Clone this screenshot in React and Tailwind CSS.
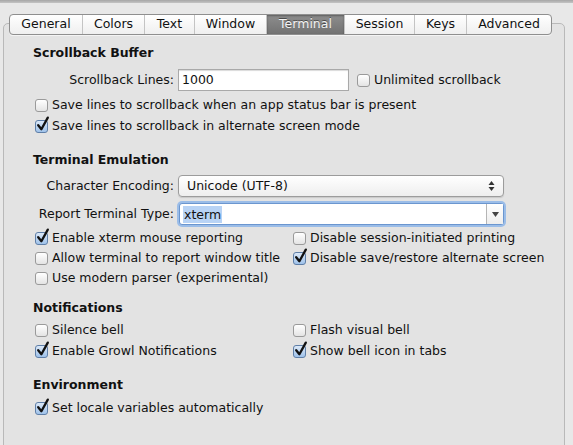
import React from 'react';

const tabs = [
    { name: 'General', w: 'w-[72px]' },
    { name: 'Colors', w: 'w-[62px]' },
    { name: 'Text', w: 'w-[50px]' },
    { name: 'Window', w: 'w-[72px]' },
    { name: 'Terminal', w: 'w-[78px]', active: true },
    { name: 'Session', w: 'w-[70px]' },
    { name: 'Keys', w: 'w-[52px]' },
    { name: 'Advanced', w: 'w-[85px]' },
];

const Checkbox = ({ checked }) => (
    <span className="relative inline-block w-[13px] h-[13px] shrink-0">
        <span className={`absolute inset-0 rounded-[3px] border ${checked
            ? 'border-[#5f7fa8] bg-gradient-to-b from-[#dbe8f7] to-[#9fc2ea]'
            : 'border-[#9a9a9a] bg-gradient-to-b from-[#ffffff] to-[#e4e4e4]'}`} />
        {checked && (
            <svg className="absolute -top-[4px] left-[1px] w-[14px] h-[16px]" viewBox="0 0 14 16">
                <path d="M2.2 9.2 L5.4 13.2 L11.8 1.6" fill="none" stroke="#111" strokeWidth="2.3" strokeLinecap="round" strokeLinejoin="round" />
            </svg>
        )}
    </span>
);

const Check = ({ label, checked, h = 'h-[20px]' }) => (
    <div className={`flex items-center gap-[4px] ${h}`}>
        <Checkbox checked={checked} />
        <span className="whitespace-nowrap">{label}</span>
    </div>
);

const Header = ({ children, mt }) => (
    <div className={`h-[18px] flex items-center font-bold ${mt}`}>{children}</div>
);

export default function App() {
    return (
        <div className="w-[573px] h-[445px] overflow-hidden bg-[#e8e8e8] text-[12.5px] text-[#111]"
            style={{ fontFamily: '"DejaVu Sans", Verdana, sans-serif' }}>
            <div className="h-[3px] bg-gradient-to-b from-[#a6a6a6] to-[#c4c4c4]" />

            <div className="flex pt-[11px]">
                <div className="w-[9px] shrink-0" />
                {/* Segmented tabs */}
                <div className="relative z-10 flex h-[21px] rounded-[4px] border border-[#8f8f8f] bg-gradient-to-b from-[#ffffff] to-[#efefef] overflow-hidden shadow-[0_1px_0_rgba(255,255,255,0.6)]">
                    {tabs.map((t, i) => (
                        <div key={t.name}
                            className={`${t.w} flex items-center justify-center ${i > 0 ? 'border-l border-[#c4c4c4]' : ''} ${t.active
                                ? 'bg-gradient-to-b from-[#8e8e8e] to-[#727272] text-[#f4f4f4] shadow-[inset_0_1px_2px_rgba(0,0,0,0.35)]'
                                : ''}`}>
                            <span style={t.active ? { textShadow: '0 -1px 0 rgba(0,0,0,0.45)' } : undefined}>{t.name}</span>
                        </div>
                    ))}
                </div>
            </div>

            <div className="flex">
                <div className="w-[3px] shrink-0" />
                <div className="-mt-[12px] w-[562px] h-[440px] rounded-[5px] border border-[#b9b9b9] bg-[#e3e3e3] pl-[29px] pt-[20px]">
                    <Header>Scrollback Buffer</Header>

                    <div className="mt-[7px] flex items-center h-[22px]">
                        <span className="w-[141px] text-right">Scrollback Lines:</span>
                        <div className="ml-[4px] w-[171px] h-[22px] border border-[#a9a9a9] bg-white flex items-center pl-[3px] shadow-[inset_0_1px_1px_rgba(0,0,0,0.15)]">1000</div>
                        <div className="ml-[8px]"><Check label="Unlimited scrollback" checked={false} /></div>
                    </div>

                    <div className="mt-[4px] pl-[2px]">
                        <Check h="h-[21px]" label="Save lines to scrollback when an app status bar is present" checked={false} />
                        <Check h="h-[21px]" label="Save lines to scrollback in alternate screen mode" checked />
                    </div>

                    <Header mt="mt-[14px]">Terminal Emulation</Header>

                    <div className="mt-[6px] flex items-center h-[22px]">
                        <span className="w-[141px] text-right">Character Encoding:</span>
                        <div className="ml-[4px] w-[326px] h-[22px] rounded-[4px] border border-[#9c9c9c] bg-gradient-to-b from-[#ffffff] to-[#eeeeee] flex items-center pl-[8px] pr-[8px] shadow-[0_1px_1px_rgba(0,0,0,0.12)]">
                            <span className="flex-1">Unicode (UTF-8)</span>
                            <svg width="7" height="12" viewBox="0 0 7 12">
                                <path d="M0.5 5 L3.5 1 L6.5 5 Z" fill="#333" />
                                <path d="M0.5 7 L3.5 11 L6.5 7 Z" fill="#333" />
                            </svg>
                        </div>
                    </div>

                    <div className="mt-[6px] flex items-center h-[22px]">
                        <span className="w-[141px] text-right">Report Terminal Type:</span>
                        <div className="ml-[5px] w-[325px] h-[22px] rounded-[3px] bg-white flex items-stretch border border-[#6b96cf] shadow-[0_0_0_2px_#9bbde8]">
                            <div className="flex-1 flex items-center pl-[3px]">
                                <span className="bg-[#b8d3f5] px-[1px] leading-[17px]">xterm</span>
                            </div>
                            <div className="w-[17px] border-l border-[#b5b5b5] bg-gradient-to-b from-[#ffffff] to-[#ededed] flex items-center justify-center">
                                <svg width="7" height="5" viewBox="0 0 7 5">
                                    <path d="M0 0 L7 0 L3.5 5 Z" fill="#444" />
                                </svg>
                            </div>
                        </div>
                    </div>

                    <div className="mt-[3px] pl-[2px] grid grid-cols-[258px_1fr]">
                        <Check label="Enable xterm mouse reporting" checked />
                        <Check label="Disable session-initiated printing" checked={false} />
                        <Check label="Allow terminal to report window title" checked={false} />
                        <Check label="Disable save/restore alternate screen" checked />
                        <Check label="Use modern parser (experimental)" checked={false} />
                    </div>

                    <Header mt="mt-[11px]">Notifications</Header>

                    <div className="mt-[3px] pl-[2px] grid grid-cols-[258px_1fr]">
                        <Check h="h-[21px]" label="Silence bell" checked={false} />
                        <Check h="h-[21px]" label="Flash visual bell" checked={false} />
                        <Check h="h-[21px]" label="Enable Growl Notifications" checked />
                        <Check h="h-[21px]" label="Show bell icon in tabs" checked />
                    </div>

                    <Header mt="mt-[14px]">Environment</Header>

                    <div className="mt-[4px] pl-[2px]">
                        <Check label="Set locale variables automatically" checked />
                    </div>
                </div>
            </div>
        </div>
    );
}
